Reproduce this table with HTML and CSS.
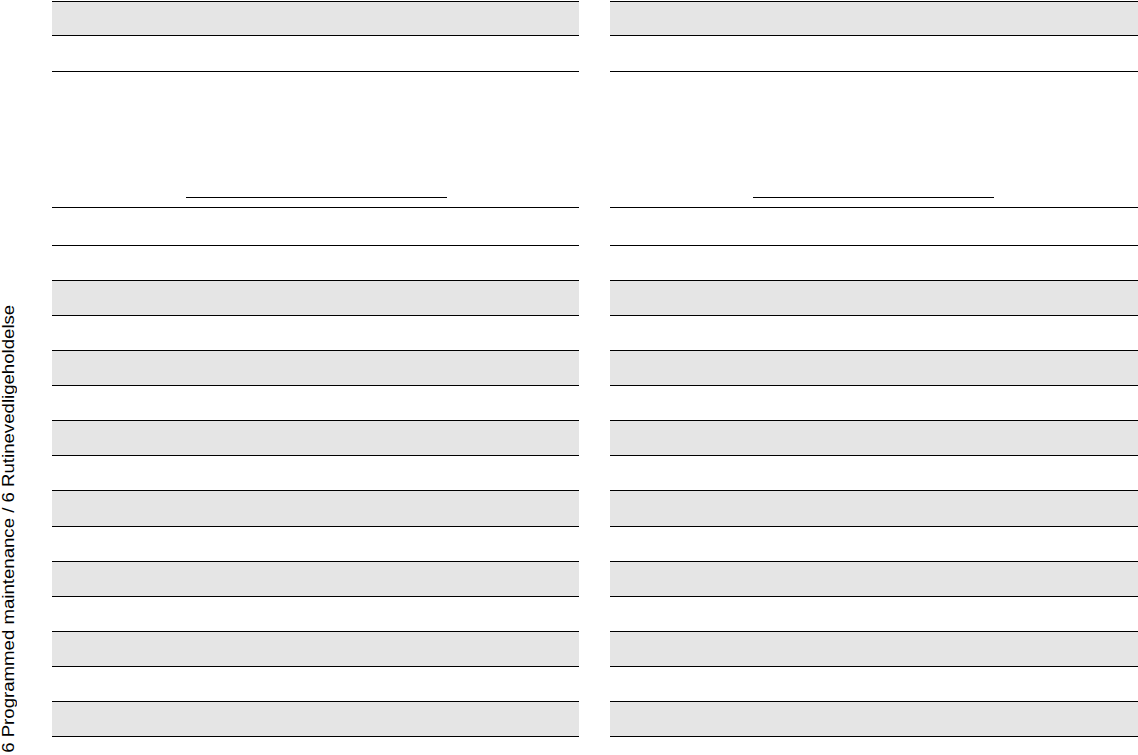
FILE: index.html
```html
<!DOCTYPE html>
<html lang="en">
<head>
<meta charset="utf-8">
<title>Programmed maintenance</title>
<link rel="stylesheet" href="styles.css">
</head>
<body>
<div class="page">
  <div class="side">
    <span class="side-label">6 Programmed maintenance / 6 Rutinevedligeholdelse</span>
  </div>
  <div class="sheet sheet-left">
    <div class="row head shade"></div>
    <div class="row sub"></div>
    <div class="sign"><span class="sign-line sign-line-left"></span></div>
    <div class="row first"></div>
    <div class="row"></div>
    <div class="row shade"></div>
    <div class="row"></div>
    <div class="row shade"></div>
    <div class="row"></div>
    <div class="row shade"></div>
    <div class="row"></div>
    <div class="row shade wide"></div>
    <div class="row"></div>
    <div class="row shade"></div>
    <div class="row"></div>
    <div class="row shade"></div>
    <div class="row"></div>
    <div class="row shade"></div>
  </div>
  <div class="sheet sheet-right">
    <div class="row head shade"></div>
    <div class="row sub"></div>
    <div class="sign"><span class="sign-line sign-line-right"></span></div>
    <div class="row first"></div>
    <div class="row"></div>
    <div class="row shade"></div>
    <div class="row"></div>
    <div class="row shade"></div>
    <div class="row"></div>
    <div class="row shade"></div>
    <div class="row"></div>
    <div class="row shade wide"></div>
    <div class="row"></div>
    <div class="row shade"></div>
    <div class="row"></div>
    <div class="row shade"></div>
    <div class="row"></div>
    <div class="row shade"></div>
  </div>
</div>
</body>
</html>
```

FILE: styles.css
```css
* { box-sizing: border-box; }

html, body {
  margin: 0;
  padding: 0;
  background: #ffffff;
}

body {
  font-family: "Liberation Sans", Arial, sans-serif;
  color: #000000;
}

.page {
  display: flex;
  width: 1138px;
  height: 755px;
  padding-top: 1px;
  overflow: hidden;
}

.side {
  width: 52px;
  flex: none;
  display: flex;
  align-items: flex-end;
  padding-bottom: 31px;
}

.side-label {
  writing-mode: vertical-rl;
  transform: rotate(180deg) scaleY(1.15);
  transform-origin: center;
  font-size: 16.2px;
  line-height: 17px;
  white-space: nowrap;
}

.sheet {
  display: flex;
  flex-direction: column;
  border-top: 1px solid #000000;
  align-self: flex-start;
}

.sheet-left {
  width: 527px;
  margin-right: 31px;
}

.sheet-right {
  flex: 1;
}

.row {
  height: 35px;
  border-bottom: 1px solid #000000;
}

.row.head { height: 34px; }
.row.sub { height: 36px; }
.row.first { height: 38px; }
.row.wide { height: 36px; }

.shade {
  background: #e5e5e5;
}

.sign {
  height: 136px;
  padding-top: 125px;
  border-bottom: 1px solid #000000;
}

.sign-line {
  display: block;
  height: 1px;
  background: #000000;
}

.sign-line-left {
  margin-left: 134px;
  width: 261px;
}

.sign-line-right {
  margin-left: 143px;
  width: 241px;
}
```
